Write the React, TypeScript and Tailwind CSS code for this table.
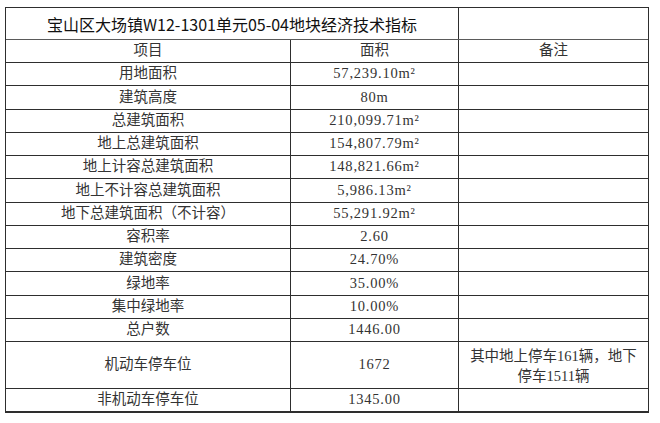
import React from "react";

type Row = { label: string; value: string; note?: string[]; h: string };

const rows: Row[] = [
  { label: "用地面积", value: "57,239.10m²", h: "h-[23px]" },
  { label: "建筑高度", value: "80m", h: "h-[24px]" },
  { label: "总建筑面积", value: "210,099.71m²", h: "h-[23px]" },
  { label: "地上总建筑面积", value: "154,807.79m²", h: "h-[23px]" },
  { label: "地上计容总建筑面积", value: "148,821.66m²", h: "h-[23px]" },
  { label: "地上不计容总建筑面积", value: "5,986.13m²", h: "h-[24px]" },
  { label: "地下总建筑面积（不计容）", value: "55,291.92m²", h: "h-[23px]" },
  { label: "容积率", value: "2.60", h: "h-[23px]" },
  { label: "建筑密度", value: "24.70%", h: "h-[23px]" },
  { label: "绿地率", value: "35.00%", h: "h-[24px]" },
  { label: "集中绿地率", value: "10.00%", h: "h-[23px]" },
  { label: "总户数", value: "1446.00", h: "h-[23px]" },
  {
    label: "机动车停车位",
    value: "1672",
    note: ["其中地上停车161辆，地下", "停车1511辆"],
    h: "h-[47px]",
  },
];

const serif = "font-['Liberation_Serif','Noto_Sans_CJK_SC',serif]";

export default function App() {
  return (
    <div className="w-[660px] h-[423px] bg-white pt-[7px] pl-[5px]">
      <div className="w-[644px] border-l border-r border-t border-b-2 border-[#2e2e2e]">
        {/* title */}
        <div className="flex h-[32px] border-b border-[#5a5a5a]">
          <div className="w-[453px] border-r border-[#2e2e2e] flex items-center justify-center text-[16px] text-[#111] font-['Noto_Sans_CJK_SC','Noto_Sans',sans-serif]">
            宝山区大场镇W12-1301单元05-04地块经济技术指标
          </div>
          <div className="flex-1" />
        </div>
        {/* header */}
        <div className={`flex h-[23px] border-b border-[#2e2e2e] text-[14.5px] text-[#333] ${serif}`}>
          <div className="w-[285px] border-r border-[#2e2e2e] flex items-center justify-center">项目</div>
          <div className="w-[168px] border-r border-[#2e2e2e] flex items-center justify-center">面积</div>
          <div className="flex-1 flex items-center justify-center">备注</div>
        </div>
        {rows.map((r) => (
          <div
            key={r.label}
            className={`flex ${r.h} border-b border-[#2e2e2e] text-[14.5px] text-[#333] ${serif}`}
          >
            <div className="w-[285px] border-r border-[#2e2e2e] flex items-center justify-center">
              {r.label}
            </div>
            <div className="w-[168px] border-r border-[#2e2e2e] flex items-center justify-center tracking-[0.8px]">
              {r.value}
            </div>
            <div className="flex-1 flex flex-col items-center justify-center leading-[20px] pt-[1px]">
              {r.note?.map((n) => (
                <span key={n}>{n}</span>
              ))}
            </div>
          </div>
        ))}
        <div className={`flex h-[22px] text-[14.5px] text-[#333] ${serif}`}>
          <div className="w-[285px] border-r border-[#2e2e2e] flex items-center justify-center">
            非机动车停车位
          </div>
          <div className="w-[168px] border-r border-[#2e2e2e] flex items-center justify-center tracking-[0.8px]">
            1345.00
          </div>
          <div className="flex-1" />
        </div>
      </div>
    </div>
  );
}
